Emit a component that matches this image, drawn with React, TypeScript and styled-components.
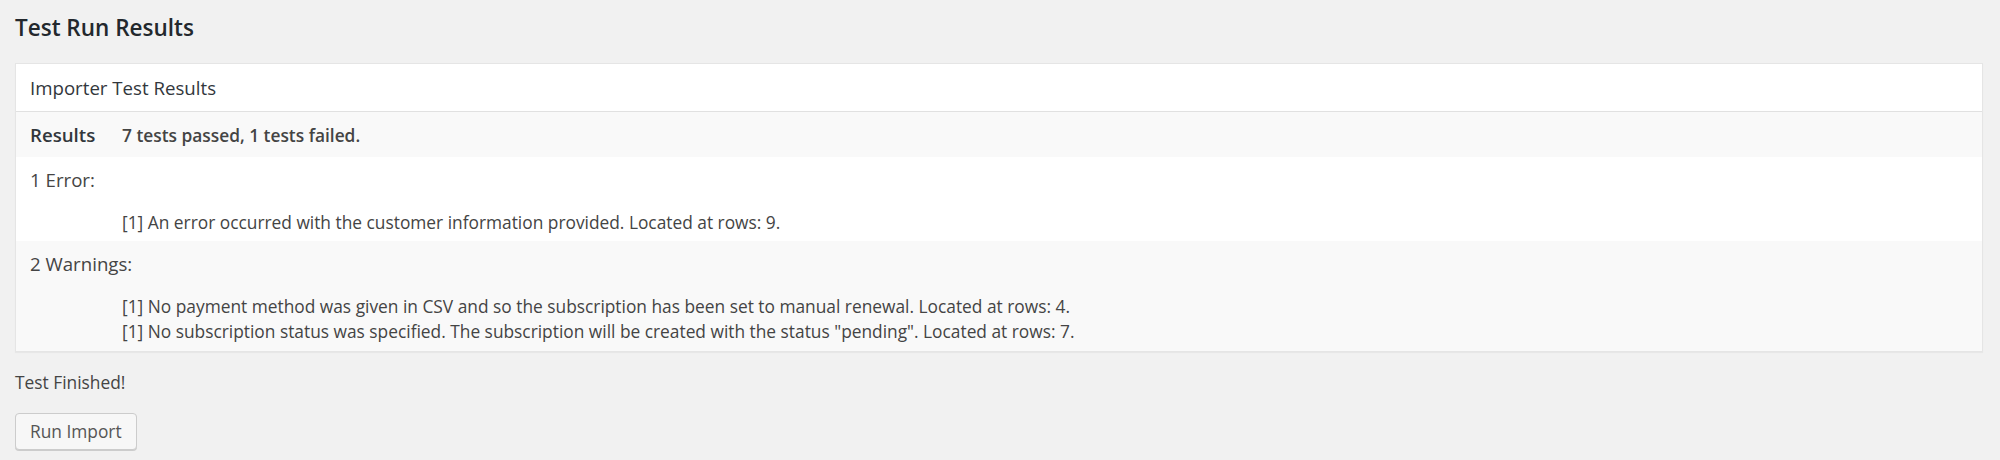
import React from "react";
import styled, { createGlobalStyle } from "styled-components";

const Global = createGlobalStyle`
  html, body { margin: 0; padding: 0; background: #f1f1f1; }
  body { font-family: "Open Sans", "Liberation Sans", sans-serif; color: #444; font-size: 17.33px; }
`;

const Wrap = styled.div`
  padding: 13px 17px 20px 15px;
`;

const Title = styled.h2`
  margin: 0 0 20px;
  font-size: 22.5px;
  line-height: 30px;
  font-weight: 600;
  color: #23282d;
`;

const Panel = styled.div`
  background: #fff;
  border: 1px solid #e5e5e5;
  box-shadow: 0 1px 1px rgba(0, 0, 0, 0.04);
`;

const PanelHead = styled.div`
  padding: 12px 14px 12px;
  font-size: 18.67px;
  line-height: 23px;
  border-bottom: 1px solid #e1e1e1;
  color: #32373c;
`;

const Row = styled.div<{ $alt?: boolean; $top?: number; $bottom?: number }>`
  background: ${(p) => (p.$alt ? "#f9f9f9" : "#fff")};
  padding: ${(p) => p.$top ?? 11}px 14px ${(p) => p.$bottom ?? 11}px;
`;

const SummaryRow = styled(Row)`
  display: grid;
  grid-template-columns: 92px 1fr;
  align-items: baseline;
  line-height: 23px;
`;

const Label = styled.span`
  font-weight: 600;
  font-size: 18.67px;
  color: #32373c;
`;

const Value = styled.span`
  font-weight: 600;
  color: #444;
  font-size: 17.33px;
`;

const GroupTitle = styled.div`
  font-size: 18.67px;
  line-height: 23px;
  color: #444;
`;

const Items = styled.ul`
  list-style: none;
  margin: 19px 0 0;
  padding: 0 0 0 92px;
  font-size: 17.33px;
  line-height: 25px;
  color: #444;
`;

const Item = styled.li`
  margin: 0;
`;

const Finished = styled.p`
  margin: 19px 0 19px;
  line-height: 23px;
  color: #444;
`;

const Button = styled.button`
  font-family: inherit;
  font-size: 17.33px;
  color: #555;
  background: #f7f7f7;
  border: 1px solid #ccc;
  border-radius: 4px;
  box-shadow: 0 1px 0 #ccc;
  height: 37px;
  padding: 0 14px;
  line-height: 35px;
  cursor: pointer;
`;

export default function App() {
  return (
    <>
      <Global />
      <Wrap>
        <Title>Test Run Results</Title>
        <Panel>
          <PanelHead>Importer Test Results</PanelHead>
          <SummaryRow $alt $top={11} $bottom={10}>
            <Label>Results</Label>
            <Value>7 tests passed, 1 tests failed.</Value>
          </SummaryRow>
          <Row $bottom={6}>
            <GroupTitle>1 Error:</GroupTitle>
            <Items>
              <Item>[1] An error occurred with the customer information provided. Located at rows: 9.</Item>
            </Items>
          </Row>
          <Row $alt $bottom={7}>
            <GroupTitle>2 Warnings:</GroupTitle>
            <Items>
              <Item>[1] No payment method was given in CSV and so the subscription has been set to manual renewal. Located at rows: 4.</Item>
              <Item>[1] No subscription status was specified. The subscription will be created with the status "pending". Located at rows: 7.</Item>
            </Items>
          </Row>
        </Panel>
        <Finished>Test Finished!</Finished>
        <Button>Run Import</Button>
      </Wrap>
    </>
  );
}
